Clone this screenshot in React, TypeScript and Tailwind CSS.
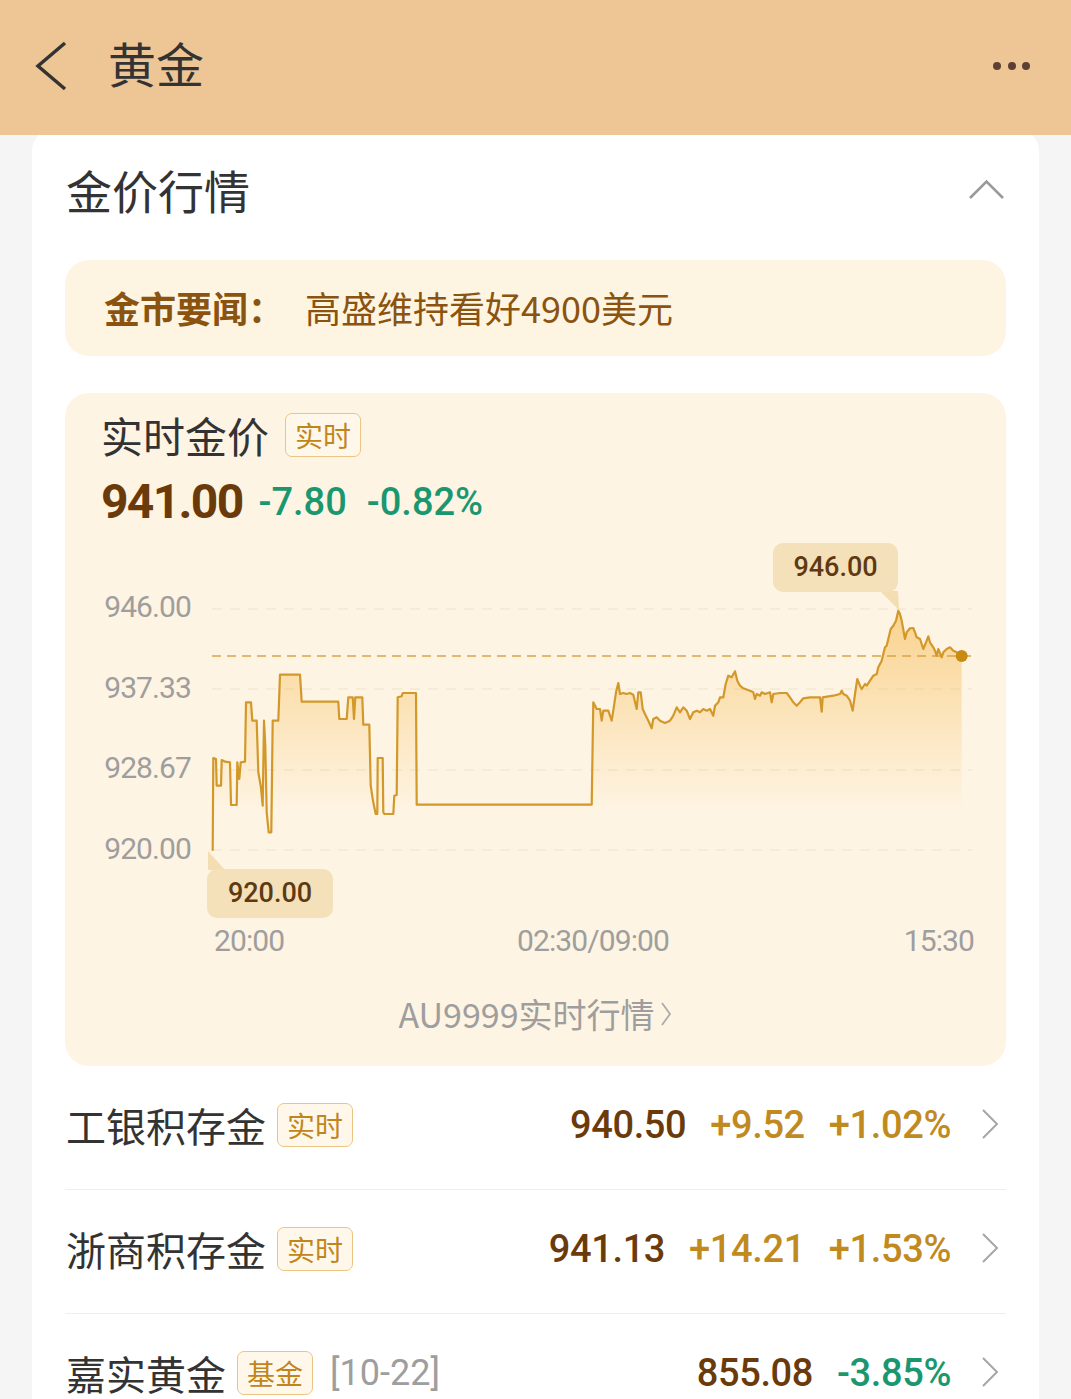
import React from "react";

const linePoints =
  "212.7,851.7 213.3,759 216,760 216.7,786.7 221,786.7 221.7,761 225,762.7 230,763.3 231,806 236.7,806 237.3,763.3 239.3,780 240.7,763.3 245,762.7 246,703.3 251,703.3 252.3,721.7 256.7,721.7 258.3,773.3 260.7,786.7 262.7,806.7 264,721.7 265.3,746.7 266.7,813.3 268.7,833.3 271.3,833.3 272.7,721.7 278.3,721.7 280,675.7 300,675.7 301.7,702.7 338.3,702.7 339.3,720 346.7,720 348.3,698.3 352.7,698.3 354,720 355.3,698.3 362.3,698.3 363.3,725.7 369.3,725.7 370.7,786.7 372.7,800 374,806.7 375.7,815 377.3,815 377.7,759 382.7,759 383.3,813.3 384.3,815 393.3,815 394.3,796.7 396.7,796 397.7,698.3 401.7,697.3 402.7,694 416,694 416.7,805.7 591.7,805.7 " +
  "593.3,703.3 596.7,710 600,710 601.7,721.7 603.3,711.7 608.3,711.7 611.7,721.7 613.3,711.7 616,693.3 618.3,684 620,695 623.3,694 626.7,695 630,694 633.3,695.7 636.7,710 638.3,693.3 640.7,693.3 642.7,710 645,715 648.3,721.7 651.7,729.3 653.3,720 656.7,718.3 660,721.7 665,724 670,721.7 673.3,716.7 676.7,708.3 680,713.3 683.3,708.3 686.7,711.7 690,720 693.3,713.3 696.7,711.7 700,713.3 703.3,710 706.7,711.7 710,710 713.3,716.7 715,706.7 718.3,703.3 720,698.3 723.3,698.3 725.7,685 728.3,676.7 731.7,678.3 735,672.3 737.3,681.7 740,686.7 743.3,689.3 750,691.7 753.3,693.3 755,700 756.7,695 760,696.7 761.7,693.3 765,695 770,693.3 771.7,703.3 773.3,695 780,694 786.7,694 790,698.3 793.3,703.3 796.7,706.7 800,703.3 803.3,699.3 810,698.3 820,698.3 821.7,712.7 822.7,698.3 833.3,696.7 840,695 841.7,691.7 843.3,695 846.7,696.7 850,701.7 852.7,711.7 855,695 857.3,680 860,686.7 861.7,690 865,685 866.7,686.7 870,681.7 873.3,676.7 876.7,675 878.3,668.3 881.7,661.7 883.3,655 885,648.3 886.7,646.7 888.3,640 890.7,630 893.3,626.7 896,621.7 898.3,611.7 900,615 901.7,621.7 905,640 906.7,633.3 910,629.3 913.3,629 915,633.3 916.7,638.3 920,640 923.3,650 926.7,641.7 928.3,637.3 930,643.3 933.3,648.3 935,651.7 936.7,656.7 938.3,650 941.7,658.3 943.3,653.3 946.7,650 950,648.3 953.3,651.7 956.7,653.3 961.7,656.7";

const areaPath = "M" + linePoints.trim().split(" ").join(" L") + " L961.7,860 L212.7,860 Z";

const gridYs = [610, 690, 771, 851];

function Badge({ children, className = "" }: { children: React.ReactNode; className?: string }) {
  return (
    <span
      className={
        "flex h-[44px] items-center rounded-[7px] border border-[#EBC583] bg-[#FFF8EA] px-[9px] text-[28px] leading-none text-[#C1861B] " +
        className
      }
    >
      {children}
    </span>
  );
}

function RowChevron() {
  return (
    <svg width="19" height="32" viewBox="0 0 19 32" className="ml-[30px] mr-[6px] -mt-[2px]">
      <path d="M2 2 L16 16 L2 30" fill="none" stroke="#A6A6A6" strokeWidth="2" />
    </svg>
  );
}

type Row = {
  name: string;
  tag: string;
  date?: string;
  price: string;
  change?: string;
  pct: string;
  up: boolean;
};

const rows: Row[] = [
  { name: "工银积存金", tag: "实时", price: "940.50", change: "+9.52", pct: "+1.02%", up: true },
  { name: "浙商积存金", tag: "实时", price: "941.13", change: "+14.21", pct: "+1.53%", up: true },
  { name: "嘉实黄金", tag: "基金", date: "[10-22]", price: "855.08", pct: "-3.85%", up: false },
];

function PriceChart() {
  return (
    <div className="relative mt-[3px] h-[440px]">
      <svg width="941" height="440" viewBox="65 530 941 440" className="block">
        <defs>
          <linearGradient id="goldArea" x1="0" y1="612" x2="0" y2="812" gradientUnits="userSpaceOnUse">
            <stop offset="0" stopColor="#F6BD58" stopOpacity="0.6" />
            <stop offset="1" stopColor="#F6BD58" stopOpacity="0" />
          </linearGradient>
        </defs>
        {gridYs.map((y) => (
          <line key={y} x1="212" x2="972" y1={y} y2={y} stroke="#F2E7D4" strokeWidth="1.5" strokeDasharray="10 8" />
        ))}
        <path d={areaPath} fill="url(#goldArea)" />
        <line x1="212" x2="972" y1="657" y2="657" stroke="#D9A448" strokeWidth="1.6" strokeDasharray="9 6" />
        <polyline points={linePoints} fill="none" stroke="#D3982A" strokeWidth="2.2" strokeLinejoin="round" />
        <circle cx="961.7" cy="657" r="6" fill="#C98912" />
        <polygon points="880,592 898,592 899,611" fill="#F3DDB3" />
        <polygon points="208,852 208,871 225,871" fill="#F3DDB3" />
      </svg>

      <div className="absolute left-0 top-[60px] w-[126px] text-right text-[30px] leading-[36px] tracking-[-0.03em] text-[#9E9E9E]">946.00</div>
      <div className="absolute left-0 top-[141px] w-[126px] text-right text-[30px] leading-[36px] tracking-[-0.03em] text-[#9E9E9E]">937.33</div>
      <div className="absolute left-0 top-[221px] w-[126px] text-right text-[30px] leading-[36px] tracking-[-0.03em] text-[#9E9E9E]">928.67</div>
      <div className="absolute left-0 top-[302px] w-[126px] text-right text-[30px] leading-[36px] tracking-[-0.03em] text-[#9E9E9E]">920.00</div>

      <div className="absolute left-[708px] top-[14px] flex h-[49px] w-[125px] items-center justify-center rounded-[10px] bg-[#F4E0B9] text-[27px] font-medium text-[#5E3A12]">
        946.00
      </div>
      <div className="absolute left-[142px] top-[340px] flex h-[49px] w-[126px] items-center justify-center rounded-[10px] bg-[#F4E0B9] text-[27px] font-medium text-[#5E3A12]">
        920.00
      </div>

      <div className="absolute left-[149px] top-[394px] text-[30px] leading-[36px] tracking-[-0.03em] text-[#9E9E9E]">20:00</div>
      <div className="absolute left-[528px] top-[394px] -translate-x-1/2 text-[30px] leading-[36px] tracking-[-0.03em] text-[#9E9E9E]">02:30/09:00</div>
      <div className="absolute right-[32px] top-[394px] text-[30px] leading-[36px] tracking-[-0.03em] text-[#9E9E9E]">15:30</div>
    </div>
  );
}

export default function App() {
  return (
    <div className="h-[1399px] overflow-hidden bg-[#F5F5F5] [font-family:'Noto_Sans_CJK_SC',sans-serif]">
      <header className="relative z-10 flex h-[135px] items-center bg-[#EEC695] pb-[4px] pl-[35px] pr-[41px]">
        <svg width="32" height="50" viewBox="0 0 32 50">
          <path d="M30 2 L3 25 L30 48" fill="none" stroke="#333333" strokeWidth="3.5" />
        </svg>
        <h1 className="-mt-[8px] ml-[41px] text-[48px] leading-none text-[#333333]">黄金</h1>
        <div className="ml-auto flex gap-[6.5px]">
          <span className="h-[8px] w-[8px] rounded-full bg-[#5C3F35]" />
          <span className="h-[8px] w-[8px] rounded-full bg-[#5C3F35]" />
          <span className="h-[8px] w-[8px] rounded-full bg-[#5C3F35]" />
        </div>
      </header>

      <main className="-mt-[6px] mx-[32px] rounded-t-[22px] bg-white px-[33px] pt-[6px]">
        <div className="flex h-[116px] items-center justify-between pb-[8px]">
          <h2 className="pl-[1px] text-[46px] leading-none text-[#333333]">金价行情</h2>
          <svg width="37" height="21" viewBox="0 0 37 21" className="mr-[1px]">
            <path d="M2 19 L18.5 2.5 L35 19" fill="none" stroke="#9A9A9A" strokeWidth="2.6" />
          </svg>
        </div>

        <div className="mt-[9px] flex h-[96px] items-center rounded-[24px] bg-[#FEF4E2] px-[39px] pb-[2px] text-[36px] leading-none text-[#8A5410]">
          <span className="font-bold">金市要闻：</span>
          <span className="ml-[21px]">高盛维持看好4900美元</span>
        </div>

        <section className="mt-[37px] rounded-[24px] bg-[#FEF4E3] pb-[32px] pt-[20px]">
          <div className="flex items-center px-[36px]">
            <span className="text-[42px] leading-none text-[#333333]">实时金价</span>
            <Badge className="ml-[16px]">实时</Badge>
          </div>

          <div className="mt-[21px] flex h-[48px] items-center px-[36px] [font-family:Roboto,sans-serif]">
            <span className="text-[48px] font-bold leading-none tracking-[-0.035em] text-[#6B3A0B]">941.00</span>
            <span className="ml-[16px] text-[38px] font-medium leading-none text-[#1B9770]">-7.80</span>
            <span className="ml-[20px] text-[38px] font-medium leading-none text-[#1B9770]">-0.82%</span>
          </div>

          <div className="[font-family:Roboto,sans-serif]">
            <PriceChart />
          </div>

          <div className="mt-[25px] flex h-[40px] items-center justify-center text-[34px] leading-none text-[#9E9E9E]">
            <span>AU9999实时行情</span>
            <svg width="14" height="26" viewBox="0 0 14 26" className="ml-[4px]">
              <path d="M3 2 L11 13 L3 24" fill="none" stroke="#ABABAB" strokeWidth="1.8" />
            </svg>
          </div>
        </section>

        {rows.map((r) => (
          <div key={r.name} className="flex h-[124px] items-center border-b border-[#EEEEEE] pb-[6px] pl-[1px]">
            <span className="text-[40px] leading-none text-[#333333]">{r.name}</span>
            <Badge className="ml-[11px]">{r.tag}</Badge>
            {r.date && (
              <span className="ml-[17px] text-[36px] leading-none text-[#9E9E9E] [font-family:Roboto,sans-serif]">{r.date}</span>
            )}
            <div className="ml-auto flex gap-[24px] text-[38px] font-medium leading-none tracking-[-0.01em] [font-family:Roboto,sans-serif]">
              <span className="text-[#6B3A0B]">{r.price}</span>
              {r.change && <span className="text-[#C18A1E]">{r.change}</span>}
              <span className={r.up ? "text-[#C18A1E]" : "text-[#1B9770]"}>{r.pct}</span>
            </div>
            <RowChevron />
          </div>
        ))}
      </main>
    </div>
  );
}
